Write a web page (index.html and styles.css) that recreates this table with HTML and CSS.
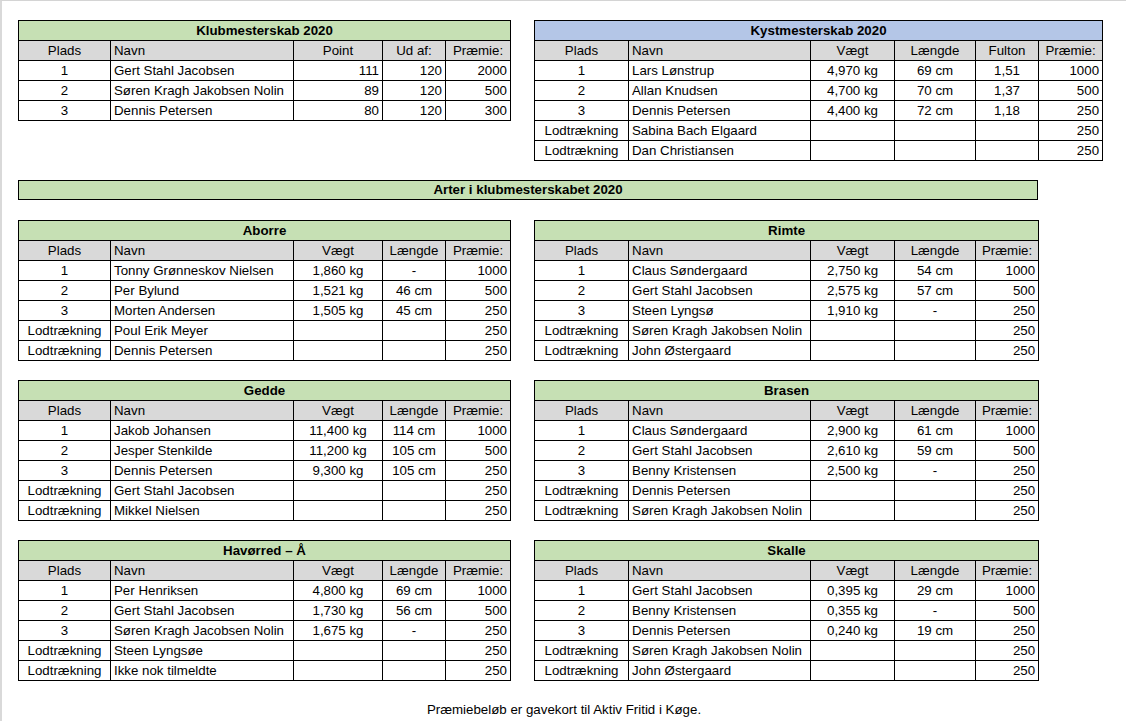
FILE: index.html
```html
<!DOCTYPE html>
<html lang="da">
<head>
<meta charset="utf-8">
<title>Klubmesterskab 2020</title>
<link rel="stylesheet" href="styles.css">
</head>
<body>
<div class="sheet">
  <div class="band">
    <table class="tbl left">
      <colgroup><col class="w-plads-l"><col class="w-navn-l"><col class="w-d"><col class="w-e"><col class="w-f"></colgroup>
      <tr class="title green"><th colspan="5">Klubmesterskab 2020</th></tr>
      <tr class="head"><td class="c">Plads</td><td>Navn</td><td class="c">Point</td><td class="c">Ud af:</td><td class="c">Præmie:</td></tr>
      <tr><td class="c">1</td><td>Gert Stahl Jacobsen</td><td class="r">111</td><td class="r">120</td><td class="r">2000</td></tr>
      <tr><td class="c">2</td><td>Søren Kragh Jakobsen Nolin</td><td class="r">89</td><td class="r">120</td><td class="r">500</td></tr>
      <tr><td class="c">3</td><td>Dennis Petersen</td><td class="r">80</td><td class="r">120</td><td class="r">300</td></tr>
    </table>
    <table class="tbl kyst">
      <colgroup><col class="w-plads-r"><col class="w-navn-r"><col class="w-j"><col class="w-k"><col class="w-l"><col class="w-m"></colgroup>
      <tr class="title blue"><th colspan="6">Kystmesterskab 2020</th></tr>
      <tr class="head"><td class="c">Plads</td><td>Navn</td><td class="c">Vægt</td><td class="c">Længde</td><td class="c">Fulton</td><td class="c">Præmie:</td></tr>
      <tr><td class="c">1</td><td>Lars Lønstrup</td><td class="c">4,970 kg</td><td class="c">69 cm</td><td class="c">1,51</td><td class="r">1000</td></tr>
      <tr><td class="c">2</td><td>Allan Knudsen</td><td class="c">4,700 kg</td><td class="c">70 cm</td><td class="c">1,37</td><td class="r">500</td></tr>
      <tr><td class="c">3</td><td>Dennis Petersen</td><td class="c">4,400 kg</td><td class="c">72 cm</td><td class="c">1,18</td><td class="r">250</td></tr>
      <tr><td class="c">Lodtrækning</td><td>Sabina Bach Elgaard</td><td></td><td></td><td></td><td class="r">250</td></tr>
      <tr><td class="c">Lodtrækning</td><td>Dan Christiansen</td><td></td><td></td><td></td><td class="r">250</td></tr>
    </table>
  </div>

  <div class="banner">Arter i klubmesterskabet 2020</div>

  <div class="band">
    <table class="tbl left">
      <colgroup><col class="w-plads-l"><col class="w-navn-l"><col class="w-d"><col class="w-e"><col class="w-f"></colgroup>
      <tr class="title green"><th colspan="5">Aborre</th></tr>
      <tr class="head"><td class="c">Plads</td><td>Navn</td><td class="c">Vægt</td><td class="c">Længde</td><td class="c">Præmie:</td></tr>
      <tr><td class="c">1</td><td>Tonny Grønneskov Nielsen</td><td class="c">1,860 kg</td><td class="c">-</td><td class="r">1000</td></tr>
      <tr><td class="c">2</td><td>Per Bylund</td><td class="c">1,521 kg</td><td class="c">46 cm</td><td class="r">500</td></tr>
      <tr><td class="c">3</td><td>Morten Andersen</td><td class="c">1,505 kg</td><td class="c">45 cm</td><td class="r">250</td></tr>
      <tr><td class="c">Lodtrækning</td><td>Poul Erik Meyer</td><td></td><td></td><td class="r">250</td></tr>
      <tr><td class="c">Lodtrækning</td><td>Dennis Petersen</td><td></td><td></td><td class="r">250</td></tr>
    </table>
    <table class="tbl right">
      <colgroup><col class="w-plads-r"><col class="w-navn-r"><col class="w-j"><col class="w-k"><col class="w-l"></colgroup>
      <tr class="title green"><th colspan="5">Rimte</th></tr>
      <tr class="head"><td class="c">Plads</td><td>Navn</td><td class="c">Vægt</td><td class="c">Længde</td><td class="c">Præmie:</td></tr>
      <tr><td class="c">1</td><td>Claus Søndergaard</td><td class="c">2,750 kg</td><td class="c">54 cm</td><td class="r">1000</td></tr>
      <tr><td class="c">2</td><td>Gert Stahl Jacobsen</td><td class="c">2,575 kg</td><td class="c">57 cm</td><td class="r">500</td></tr>
      <tr><td class="c">3</td><td>Steen Lyngsø</td><td class="c">1,910 kg</td><td class="c">-</td><td class="r">250</td></tr>
      <tr><td class="c">Lodtrækning</td><td>Søren Kragh Jakobsen Nolin</td><td></td><td></td><td class="r">250</td></tr>
      <tr><td class="c">Lodtrækning</td><td>John Østergaard</td><td></td><td></td><td class="r">250</td></tr>
    </table>
  </div>

  <div class="band">
    <table class="tbl left">
      <colgroup><col class="w-plads-l"><col class="w-navn-l"><col class="w-d"><col class="w-e"><col class="w-f"></colgroup>
      <tr class="title green"><th colspan="5">Gedde</th></tr>
      <tr class="head"><td class="c">Plads</td><td>Navn</td><td class="c">Vægt</td><td class="c">Længde</td><td class="c">Præmie:</td></tr>
      <tr><td class="c">1</td><td>Jakob Johansen</td><td class="c">11,400 kg</td><td class="c">114 cm</td><td class="r">1000</td></tr>
      <tr><td class="c">2</td><td>Jesper Stenkilde</td><td class="c">11,200 kg</td><td class="c">105 cm</td><td class="r">500</td></tr>
      <tr><td class="c">3</td><td>Dennis Petersen</td><td class="c">9,300 kg</td><td class="c">105 cm</td><td class="r">250</td></tr>
      <tr><td class="c">Lodtrækning</td><td>Gert Stahl Jacobsen</td><td></td><td></td><td class="r">250</td></tr>
      <tr><td class="c">Lodtrækning</td><td>Mikkel Nielsen</td><td></td><td></td><td class="r">250</td></tr>
    </table>
    <table class="tbl right">
      <colgroup><col class="w-plads-r"><col class="w-navn-r"><col class="w-j"><col class="w-k"><col class="w-l"></colgroup>
      <tr class="title green"><th colspan="5">Brasen</th></tr>
      <tr class="head"><td class="c">Plads</td><td>Navn</td><td class="c">Vægt</td><td class="c">Længde</td><td class="c">Præmie:</td></tr>
      <tr><td class="c">1</td><td>Claus Søndergaard</td><td class="c">2,900 kg</td><td class="c">61 cm</td><td class="r">1000</td></tr>
      <tr><td class="c">2</td><td>Gert Stahl Jacobsen</td><td class="c">2,610 kg</td><td class="c">59 cm</td><td class="r">500</td></tr>
      <tr><td class="c">3</td><td>Benny Kristensen</td><td class="c">2,500 kg</td><td class="c">-</td><td class="r">250</td></tr>
      <tr><td class="c">Lodtrækning</td><td>Dennis Petersen</td><td></td><td></td><td class="r">250</td></tr>
      <tr><td class="c">Lodtrækning</td><td>Søren Kragh Jakobsen Nolin</td><td></td><td></td><td class="r">250</td></tr>
    </table>
  </div>

  <div class="band">
    <table class="tbl left">
      <colgroup><col class="w-plads-l"><col class="w-navn-l"><col class="w-d"><col class="w-e"><col class="w-f"></colgroup>
      <tr class="title green"><th colspan="5">Havørred – Å</th></tr>
      <tr class="head"><td class="c">Plads</td><td>Navn</td><td class="c">Vægt</td><td class="c">Længde</td><td class="c">Præmie:</td></tr>
      <tr><td class="c">1</td><td>Per Henriksen</td><td class="c">4,800 kg</td><td class="c">69 cm</td><td class="r">1000</td></tr>
      <tr><td class="c">2</td><td>Gert Stahl Jacobsen</td><td class="c">1,730 kg</td><td class="c">56 cm</td><td class="r">500</td></tr>
      <tr><td class="c">3</td><td>Søren Kragh Jacobsen Nolin</td><td class="c">1,675 kg</td><td class="c">-</td><td class="r">250</td></tr>
      <tr><td class="c">Lodtrækning</td><td>Steen Lyngsøe</td><td></td><td></td><td class="r">250</td></tr>
      <tr><td class="c">Lodtrækning</td><td>Ikke nok tilmeldte</td><td></td><td></td><td class="r">250</td></tr>
    </table>
    <table class="tbl right">
      <colgroup><col class="w-plads-r"><col class="w-navn-r"><col class="w-j"><col class="w-k"><col class="w-l"></colgroup>
      <tr class="title green"><th colspan="5">Skalle</th></tr>
      <tr class="head"><td class="c">Plads</td><td>Navn</td><td class="c">Vægt</td><td class="c">Længde</td><td class="c">Præmie:</td></tr>
      <tr><td class="c">1</td><td>Gert Stahl Jacobsen</td><td class="c">0,395 kg</td><td class="c">29 cm</td><td class="r">1000</td></tr>
      <tr><td class="c">2</td><td>Benny Kristensen</td><td class="c">0,355 kg</td><td class="c">-</td><td class="r">500</td></tr>
      <tr><td class="c">3</td><td>Dennis Petersen</td><td class="c">0,240 kg</td><td class="c">19 cm</td><td class="r">250</td></tr>
      <tr><td class="c">Lodtrækning</td><td>Søren Kragh Jakobsen Nolin</td><td></td><td></td><td class="r">250</td></tr>
      <tr><td class="c">Lodtrækning</td><td>John Østergaard</td><td></td><td></td><td class="r">250</td></tr>
    </table>
  </div>

  <p class="note">Præmiebeløb er gavekort til Aktiv Fritid i Køge.</p>
</div>
</body>
</html>
```

FILE: styles.css
```css
html, body {
  margin: 0;
  padding: 0;
  background: #ffffff;
}

body {
  font-family: "Liberation Sans", Arial, sans-serif;
  font-size: 13.3px;
  color: #000000;
}

.sheet {
  box-sizing: border-box;
  width: 1126px;
  height: 721px;
  border-top: 1px solid #d4d4d4;
  border-left: 2px solid #d9d9d9;
  padding: 19px 0 0 16px;
  display: flex;
  flex-direction: column;
  gap: 20px;
}

.band {
  display: flex;
  align-items: flex-start;
  gap: 23px;
  margin-bottom: -1px;
}

.tbl {
  border-collapse: collapse;
  table-layout: fixed;
  border: 1px solid #000;
}

.tbl.left { width: 492px; }
.tbl.right { width: 504px; }
.tbl.kyst { width: 568px; }

.w-plads-l { width: 92px; }
.w-navn-l { width: 183px; }
.w-d { width: 89px; }
.w-e { width: 63px; }
.w-f { width: 65px; }

.w-plads-r { width: 94px; }
.w-navn-r { width: 182px; }
.w-j { width: 84px; }
.w-k { width: 81px; }
.w-l { width: 63px; }
.w-m { width: 64px; }

.tbl tr {
  height: 20px;
}

.tbl td,
.tbl th {
  border: 1px solid #000;
  padding: 0 3px;
  line-height: 19px;
  white-space: nowrap;
  overflow: hidden;
  text-align: left;
  vertical-align: middle;
  font-weight: normal;
}

.tbl .title th {
  font-weight: bold;
  text-align: center;
}

.green th { background: #c6e0b4; }
.blue th { background: #b4c6e7; }

.head td { background: #d9d9d9; }

.tbl td.c { text-align: center; padding-left: 1px; padding-right: 1px; }
.tbl td.r { text-align: right; }

.banner {
  box-sizing: border-box;
  width: 1020px;
  height: 20px;
  line-height: 18px;
  border: 1px solid #000;
  background: #c6e0b4;
  font-weight: bold;
  text-align: center;
}

.note {
  margin: 0;
  margin-left: -16px;
  height: 20px;
  line-height: 20px;
  text-align: center;
}
```
